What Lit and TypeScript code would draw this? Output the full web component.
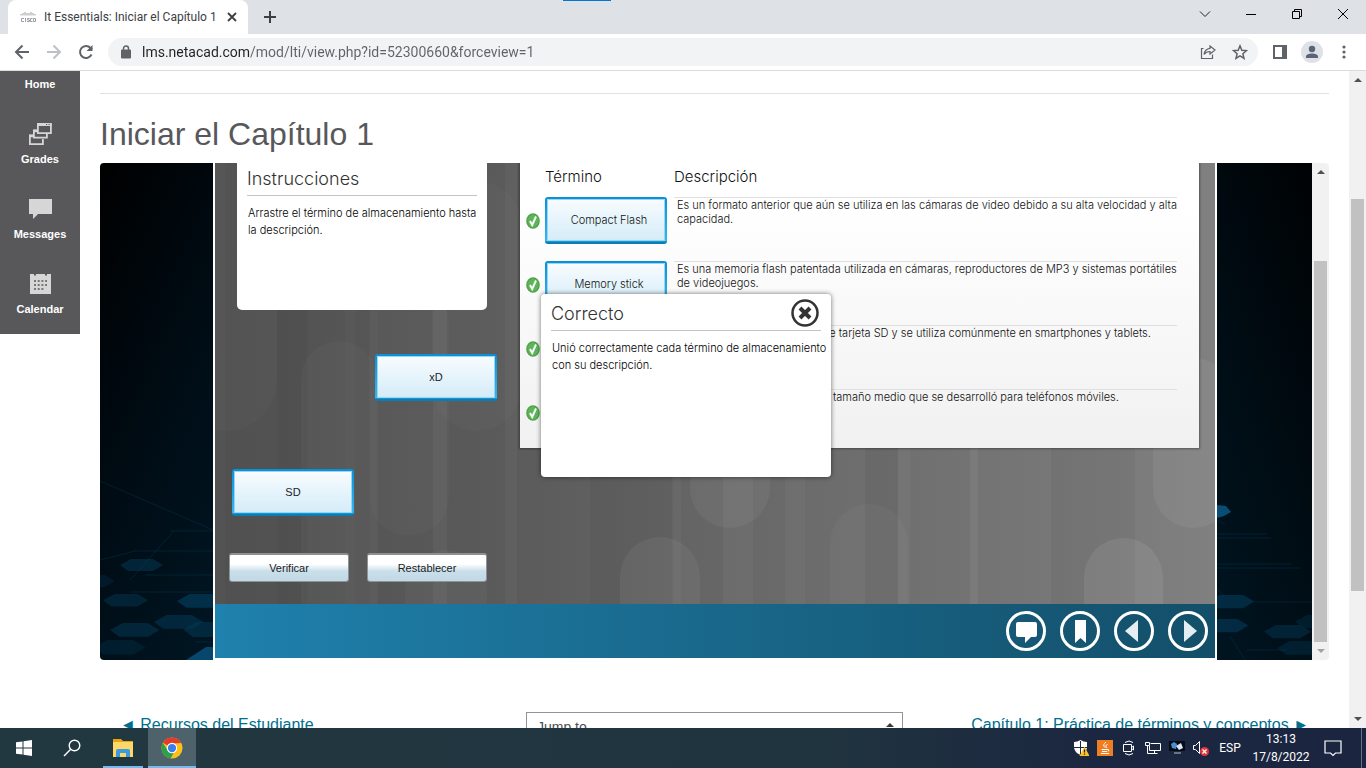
import { LitElement, html, css, svg } from "lit";
import { customElement } from "lit/decorators.js";

const ui = css`
  *, *::before, *::after { box-sizing: border-box; }
  button, input, select { font: inherit; color: inherit; margin: 0; }
  button { padding: 0; border: 0; background: none; cursor: pointer; display: flex; align-items: center; justify-content: center; }
  svg { display: block; flex: none; }
`;

@customElement("browser-bar")
class BrowserBar extends LitElement {
  static styles = [ui, css`
    :host { display: block; flex: none; font-family: Roboto, "Open Sans", sans-serif; background: #dee1e6; }
    .strip { display: flex; height: 34px; padding-left: 8px; position: relative; }
    .accent { position: absolute; top: 0; left: 563px; width: 48px; height: 1px; background: #0078d7; }
    .tab { display: flex; align-items: center; width: 240px; padding: 0 10px 0 12px; background: #fff; border-radius: 8px 8px 0 0; color: #3c4043; font-size: 12px; }
    .tab span { flex: 1; margin-left: 8px; white-space: nowrap; }
    .plus { width: 44px; }
    .win { display: flex; margin-left: auto; }
    .win button { width: 46px; height: 28px; }
    .tools { display: flex; align-items: center; height: 36px; background: #fff; padding: 0 6px 0 6px; }
    .tools > button { width: 32px; height: 32px; }
    .omni { flex: 1; display: flex; align-items: center; height: 28px; margin: 0 6px; padding: 0 2px 0 12px; border-radius: 14px; background: #f1f3f4; }
    .omni input { flex: 1; min-width: 0; height: 28px; margin-left: 10px; padding: 0; border: 0; outline: 0; font-size: 14px; color: transparent; background: linear-gradient(90deg, #202124 108px, #5f6368 108px) text; -webkit-text-fill-color: transparent; }
    .omni button { width: 32px; height: 28px; }
    .line { height: 1px; background: #dadce0; }
  `];

  render() {
    return html`
      <div class="strip">
        <div class="accent"></div>
        <div class="tab">
          <svg width="16" height="16" viewBox="0 0 16 16" stroke="#9aa0a6" fill="none"><path d="M1 5v1.500M3 4v2.500M5 3v3.500M7 4v2.500M9 4v2.500M11 3v3.500M13 4v2.500M15 5v1.500" /><path d="M4 9.500H1.500v3H4M5.500 9v4M9.500 9.500H7.500v1.500h2v1.500h-2.500M12.500 9.500h-2v3h2M13.500 9.500h2v3h-2z" /></svg>
          <span>It Essentials: Iniciar el Capítulo 1</span>
          <button aria-label="Cerrar pestaña"><svg width="12" height="12" viewBox="0 0 12 12" stroke="#3c4043" stroke-width="1.800"><path d="M2 2l8 8M10 2l-8 8" /></svg></button>
        </div>
        <button class="plus" aria-label="Nueva pestaña"><svg width="14" height="14" viewBox="0 0 14 14" stroke="#3c4043" stroke-width="2"><path d="M7 1v12M1 7h12" /></svg></button>
        <div class="win">
          <button aria-label="Buscar pestañas"><svg width="12" height="12" viewBox="0 0 12 12" fill="none" stroke="#222"><path d="M1 3.500l5 5 5-5" /></svg></button>
          <button aria-label="Minimizar"><svg width="12" height="12" viewBox="0 0 12 12" stroke="#000"><path d="M1 6.500h10" /></svg></button>
          <button aria-label="Restaurar"><svg width="12" height="12" viewBox="0 0 12 12" fill="none" stroke="#000"><path d="M1.500 3.500h7v7h-7zM3.500 3.500v-2h7v7h-2" /></svg></button>
          <button aria-label="Cerrar"><svg width="12" height="12" viewBox="0 0 12 12" stroke="#000"><path d="M1 1l10 10M11 1L1 11" /></svg></button>
        </div>
      </div>
      <div class="tools">
        <button aria-label="Atrás"><svg width="16" height="16" viewBox="0 0 16 16" fill="none" stroke="#5f6368" stroke-width="2"><path d="M15 8H2.500M8.500 1.500L2 8l6.500 6.500" /></svg></button>
        <button aria-label="Adelante"><svg width="16" height="16" viewBox="0 0 16 16" fill="none" stroke="#bdc1c6" stroke-width="2"><path d="M1 8h12.500M7.500 1.500L14 8l-6.500 6.500" /></svg></button>
        <button aria-label="Recargar"><svg width="16" height="16" viewBox="0 0 16 16" fill="none" stroke="#5f6368" stroke-width="2"><path d="M13.500 10.500A6 6 0 1 1 12.500 4L14 5.500" /><path d="M14.500 1v6h-6z" fill="#5f6368" stroke="none" /></svg></button>
        <div class="omni">
          <svg width="12" height="14" viewBox="0 0 12 14"><path d="M1.500 5h9v8h-9z" fill="#5f6368" stroke="#5f6368" /><path d="M3.500 5V3.500a2.500 2.500 0 0 1 5 0V5" fill="none" stroke="#5f6368" stroke-width="1.500" /></svg>
          <input aria-label="Dirección" value="lms.netacad.com/mod/lti/view.php?id=52300660&forceview=1" />
          <button aria-label="Compartir"><svg width="16" height="16" viewBox="0 0 16 16" fill="none" stroke="#5f6368" stroke-width="1.200"><path d="M3.500 4.500H1.500v10h11v-4" /><path d="M10 2l5 4-5 4V7.500c-3 0-4.500.8-6 2.800.5-3.500 2.500-5.600 6-6z" /></svg></button>
          <button aria-label="Marcar"><svg width="16" height="16" viewBox="0 0 16 16" fill="none" stroke="#5f6368" stroke-width="1.500"><path d="M8 1.800l1.800 4.400 4.700.4-3.600 3.100 1.100 4.600L8 11.800l-4 2.500 1.100-4.600L1.500 6.600l4.700-.4z" /></svg></button>
        </div>
        <button aria-label="Panel lateral"><svg width="14" height="14" viewBox="0 0 14 14"><path d="M1 1h12v12H1z" fill="none" stroke="#5f6368" stroke-width="2" /><path d="M9 0h5v14H9z" fill="#5f6368" /></svg></button>
        <button aria-label="Perfil"><svg width="22" height="22" viewBox="0 0 22 22"><circle cx="11" cy="11" r="11" fill="#dee1e6" /><circle cx="11" cy="8" r="3.200" fill="#5a6478" /><path d="M5 17v-1.500c0-2 3-3 6-3s6 1 6 3V17z" fill="#5a6478" /></svg></button>
        <button aria-label="Menú"><svg width="4" height="16" viewBox="0 0 4 16" fill="#5f6368"><circle cx="2" cy="3" r="1.600" /><circle cx="2" cy="8" r="1.600" /><circle cx="2" cy="13" r="1.600" /></svg></button>
      </div>
      <div class="line"></div>`;
  }
}

@customElement("side-nav")
class SideNav extends LitElement {
  static styles = [ui, css`
    :host { display: block; flex: none; align-self: flex-start; width: 80px; background: #58585b; font: bold 11px/14px "Liberation Sans", Arial, sans-serif; }
    a { display: flex; flex-direction: column; align-items: center; gap: 6px; padding: 13px 0 18px; color: #fff; text-decoration: none; }
    .home { padding-top: 6px; }
  `];

  render() {
    return html`<nav>
      <a class="home" href="#home">Home</a>
      <a href="#grades"><svg width="24" height="24" viewBox="0 0 24 24" fill="none" stroke="#d6d6d6" stroke-width="1.800"><path d="M9.900 2.900h13v8.200h-13z" /><path d="M9 1h14.800v3H9z" fill="#d6d6d6" stroke="none" /><path d="M9 8.500H5.900v7.200h13V12M5 13.500H1.900v8.600h13V17" /><path d="M5 9h4M1 14h4" stroke-width="2.500" /><path d="M18 2.500h1.200M20.500 2.500h1.200" stroke="#58585b" stroke-width="1" /></svg>Grades</a>
      <a href="#messages"><svg width="24" height="24" viewBox="0 0 24 24" fill="#d6d6d6"><path d="M1 2h23v15H10l-5 5v-5H1z" /></svg>Messages</a>
      <a href="#calendar"><svg width="24" height="24" viewBox="0 0 24 24"><path d="M2 2h21v20H2z" fill="#d6d6d6" /><path d="M7 2v1.500M18 2v1.500" stroke="#58585b" stroke-width="2" /><path d="M6 9h13M6 13h13M6 17h10" stroke="#58585b" stroke-width="1.600" stroke-dasharray="2 1.700" /></svg>Calendar</a>
    </nav>`;
  }
}

@customElement("scroll-rail")
class ScrollRail extends LitElement {
  static styles = [ui, css`
    :host { display: flex; flex-direction: column; flex: none; width: 17px; background: #f1f1f1; }
    button { height: 18px; flex: none; }
    .before { flex: var(--before, 1) 1 0; }
    .thumb { flex: var(--size, 1) 1 0; margin: 0 2px; background: #c1c1c1; }
    .after { flex: var(--after, 1) 1 0; }
    .down { fill: var(--down, #505050); }
  `];

  render() {
    return html`
      <button aria-label="Subir"><svg width="8" height="4" viewBox="0 0 8 4" fill="#505050"><path d="M0 4l4-4 4 4z" /></svg></button>
      <div class="before"></div><div class="thumb"></div><div class="after"></div>
      <button aria-label="Bajar"><svg class="down" width="8" height="4" viewBox="0 0 8 4"><path d="M0 0l4 4 4-4z" /></svg></button>`;
  }
}

const hex = (x: number, y: number, s: number, o: number) =>
  svg`<path d=${`M${x} ${y + 6 * s}L${x + 11 * s} ${y}L${x + 33 * s} ${y}L${x + 43 * s} ${y + 6 * s}L${x + 33 * s} ${y + 12 * s}L${x + 8 * s} ${y + 12 * s}z`} fill="#033652" opacity=${o} />`;

const pill = (x: number, y: number, w: number, h: number, fill: string, o: number) =>
  svg`<rect x=${x} y=${y} width=${w} height=${h} rx=${w / 2} fill=${fill} opacity=${o} />`;

const band = (x: number, w: number, fill: string, o: number) =>
  svg`<path d=${`M${x} 0h${w}v441h-${w}z`} fill=${fill} opacity=${o} />`;

const rows = [
  { term: "Compact Flash", text: ["Es un formato anterior que aún se utiliza en las cámaras de video debido a su alta velocidad y alta", "capacidad."] },
  { term: "Memory stick", text: ["Es una memoria flash patentada utilizada en cámaras, reproductores de MP3 y sistemas portátiles", "de videojuegos."] },
  { term: "microSD", text: ["Es la versión más compacta de tarjeta SD y se utiliza comúnmente en smartphones y tablets."] },
  { term: "miniSD", text: ["Es la variante de tarjeta SD de tamaño medio que se desarrolló para teléfonos móviles."] },
];

@customElement("lesson-frame")
class LessonFrame extends LitElement {
  static styles = [ui, css`
    :host { display: flex; height: 497px; border-radius: 4px; overflow: hidden; font: 300 11px/17px Inter, "Liberation Sans", sans-serif; color: #111; }
    .side { flex: none; position: relative; overflow: hidden; }
    .side svg { position: absolute; left: 0; bottom: 0; }
    .left { width: 113px; background: linear-gradient(115deg, #000 0%, #000d16 55%, #001623 100%); }
    .right { width: 95px; background: linear-gradient(250deg, #000204 0%, #000c13 50%, #001521 100%); }
    .center { flex: 1; min-width: 0; display: flex; flex-direction: column; margin: 0 2px 2px; }
    .stage { position: relative; flex: 1; display: flex; overflow: hidden; background: linear-gradient(90deg, #505050, #5b5b5b 30%, #6d6d6d 62%, #757575 80%, #808080); }
    .bg { position: absolute; inset: 0; width: 100%; height: 100%; }
    .task { position: relative; width: 305px; flex: none; display: flex; flex-direction: column; padding-left: 14px; }
    .card { background: #fff; border-radius: 0 0 5px 5px; width: 250px; height: 147px; margin-left: 8px; padding: 0 10px; color: #000; }
    h2 { margin: 0; font-weight: 300; font-size: 18px; line-height: 32px; border-bottom: 1px solid #c4c4c4; color: #333; }
    .card p, .dialog p { margin: 9px 0 0; padding-left: 1px; white-space: nowrap; }
    .actions { display: flex; gap: 18px; margin-top: auto; padding-bottom: 22px; }
    .push { width: 120px; height: 29px; border: 1px solid #8d9396; border-top: 2px solid #8f8f8f; border-radius: 3px; color: #222; background: linear-gradient(#fff 35%, #c9dfea 62%, #c1d9e5); font-family: "Liberation Sans", Arial, sans-serif; }
    .chip { width: 122px; height: 47px; border: solid transparent; border-width: 2px 2px 3px; border-radius: 3px; color: #111;
      background: linear-gradient(#f8fcff, #d4ecf8) padding-box, linear-gradient(#0a90d6, #33b6f0 93%, #087fb4 96%) border-box; box-shadow: inset 0 0 0 1px #9ad6f4; }
    .loose { position: absolute; color: #222; font-family: "Liberation Sans", Arial, sans-serif; }
    .sheet { position: relative; flex: 1; height: 285px; margin-right: 16px; background: linear-gradient(#fff 15%, #f1f1f1); box-shadow: 0 0 2px 1px rgba(0, 0, 0, .35); }
    table { border-collapse: collapse; width: 100%; table-layout: fixed; line-height: 14px; }
    th { height: 34px; padding: 0 0 6px; text-align: left; font-weight: 300; font-size: 15px; }
    td { height: 64px; padding: 0; vertical-align: top; }
    .c1 { width: 25px; } .c2 { width: 129px; } .c4 { width: 22px; }
    .ok svg { margin: 16px 0 0 6px; }
    .term .chip { padding-left: 6px; }
    .desc { border-top: 1px solid #e0e0e0; padding: 0 0 0 3px; white-space: nowrap; }
    .dialog { position: absolute; left: 326px; top: 131px; width: 290px; height: 183px; padding: 4px 10px; border-radius: 4px; background: #fff; box-shadow: 0 0 5px rgba(0, 0, 0, .55); color: #000; }
    .close { position: absolute; right: 11px; top: 4px; }
    .bar { display: flex; justify-content: flex-end; align-items: center; gap: 14px; height: 54px; padding-right: 7px; background: linear-gradient(90deg, #1f81ad, #134f69); }
    scroll-rail { --before: 80; --size: 382; --after: 0; --down: #a3a3a3; }
  `];

  render() {
    return html`
      <div class="side left"><svg width="113" height="230" viewBox="0 0 113 230">
        ${hex(20, 129, 1, .55)}${hex(-28, 145, 1, .3)}${hex(3, 164, 1.050, .5)}${hex(77, 164, 1.150, .8)}${hex(54, 185, 1.150, .6)}${hex(10, 193, 1.150, .55)}${hex(83, 192, 1.250, .6)}${hex(-6, 210, 1.200, .35)}
        <path d="M86 230l20-13h7v13z" fill="#0a5c8c" opacity=".7" />
        <path d="M0 51l113 49M70 101h43M74 101L30 150M35 121h78M45 145h68M30 162h83M0 130l35-9M95 212h18" fill="none" stroke="#0a4a6e" opacity=".3" />
      </svg></div>
      <div class="center">
        <div class="stage">
          <svg class="bg" viewBox="0 0 1000 441" preserveAspectRatio="none">
            ${band(0, 10, "#fff", .02)}${band(62, 30, "#000", .03)}${band(130, 10, "#fff", .02)}${band(155, 8, "#fff", .02)}${band(218, 14, "#fff", .04)}${band(290, 12, "#fff", .03)}${band(375, 82, "#000", .04)}${band(458, 8, "#fff", .03)}${band(508, 30, "#fff", .04)}${band(570, 20, "#fff", .03)}${band(650, 33, "#000", .05)}${band(683, 12, "#fff", .03)}${band(755, 8, "#fff", .05)}${band(836, 84, "#000", .04)}
            ${pill(-40, -60, 102, 328, "#fff", .02)}${pill(86, 178, 76, 330, "#fff", .025)}${pill(154, 120, 80, 253, "#fff", .02)}${pill(190, 387, 82, 200, "#fff", .035)}${pill(217, 18, 90, 250, "#fff", .02)}
            ${pill(405, 374, 80, 200, "#fff", .05)}${pill(475, 200, 80, 165, "#fff", .05)}${pill(615, 341, 78, 200, "#fff", .03)}${pill(938, 195, 80, 170, "#fff", .06)}${pill(869, 375, 79, 200, "#fff", .08)}
          </svg>
          <section class="task">
            <div class="card"><h2>Instrucciones</h2><p>Arrastre el término de almacenamiento hasta<br />la descripción.</p></div>
            <div class="actions"><button class="push">Verificar</button><button class="push">Restablecer</button></div>
          </section>
          <section class="sheet">
            <table>
              <colgroup><col class="c1" /><col class="c2" /><col /><col class="c4" /></colgroup>
              <thead><tr><th></th><th>Término</th><th>Descripción</th><th></th></tr></thead>
              <tbody>${rows.map((r) => html`<tr>
                <td class="ok"><svg width="14" height="16" viewBox="0 0 14 16"><ellipse cx="7" cy="8" rx="6.800" ry="7.800" fill="#4da648" /><ellipse cx="7" cy="8" rx="5.300" ry="6.300" fill="#5fb45a" /><path d="M4 8l2.200 4L10 3.500" fill="none" stroke="#fff" stroke-width="1.900" /></svg></td>
                <td class="term"><button class="chip">${r.term}</button></td>
                <td class="desc">${r.text.map((t, i) => (i ? html`<br />${t}` : t))}</td><td></td>
              </tr>`)}</tbody>
            </table>
          </section>
          <button class="chip loose" style="left:160px;top:191px">xD</button>
          <button class="chip loose" style="left:17px;top:306px">SD</button>
          <div class="dialog" role="dialog" aria-label="Correcto">
            <h2>Correcto</h2>
            <button class="close" aria-label="Cerrar"><svg width="30" height="30" viewBox="0 0 30 30" fill="none" stroke="#333"><circle cx="15" cy="15" r="12.500" stroke-width="2.500" /><path d="M10 10l10 10M20 10L10 20" stroke-width="4" /></svg></button>
            <p>Unió correctamente cada término de almacenamiento<br />con su descripción.</p>
          </div>
        </div>
        <div class="bar">
          <button aria-label="Comentarios"><svg width="40" height="40" viewBox="0 0 40 40"><circle cx="20" cy="20" r="18.500" fill="none" stroke="#fff" stroke-width="3" /><path d="M12 11h17q2 0 2 2v11q0 2-2 2h-4l-6 6v-6h-7q-2 0-2-2V13q0-2 2-2z" fill="#fff" /></svg></button>
          <button aria-label="Marcador"><svg width="40" height="40" viewBox="0 0 40 40"><circle cx="20" cy="20" r="18.500" fill="none" stroke="#fff" stroke-width="3" /><path d="M15 9h11v23l-5.500-5L15 32z" fill="#fff" /></svg></button>
          <button aria-label="Anterior"><svg width="40" height="40" viewBox="0 0 40 40"><circle cx="20" cy="20" r="18.500" fill="none" stroke="#fff" stroke-width="3" /><path d="M24 9v22L11 20z" fill="#e4edf2" /></svg></button>
          <button aria-label="Siguiente"><svg width="40" height="40" viewBox="0 0 40 40"><circle cx="20" cy="20" r="18.500" fill="none" stroke="#fff" stroke-width="3" /><path d="M16 9v22l13-11z" fill="#e4edf2" /></svg></button>
        </div>
      </div>
      <div class="side right"><svg width="95" height="230" viewBox="0 0 95 230">
        <path d="M0 75l9 1 5 6-7 4-7 2z" fill="#0a5c8c" opacity=".8" />
        ${hex(-10, 165, 1.100, .7)}${hex(-16, 189, 1.100, .7)}${hex(47, 195, 1.100, .5)}${hex(78, 185, 1.100, .35)}${hex(60, 211, 1.150, .4)}
        <path d="M0 104h50M0 108h54M0 134h74M0 138h84M37 172h58M13 206l15 24M30 220h40M0 90l8 4M0 158l8 10" fill="none" stroke="#0a4a6e" opacity=".3" />
      </svg></div>
      <scroll-rail></scroll-rail>`;
  }
}

@customElement("task-bar")
class TaskBar extends LitElement {
  static styles = [ui, css`
    :host { display: flex; flex: none; height: 40px; background: linear-gradient(90deg, #223840, #20343f 60%, #1b2740 80%, #1b2540); color: #fff; font: 12px/18px Roboto, "Open Sans", sans-serif; }
    .app { width: 48px; height: 40px; }
    .on { background: #4e626b; border-bottom: 2px solid #76b9ed; padding-top: 2px; width: 48px; }
    .file { width: 40px; margin: 0 5px 0 7px; border-bottom: 2px solid #76b9ed; padding-top: 2px; }
    .tray { display: flex; align-items: center; margin-left: auto; }
    .tray button { width: 24px; height: 40px; }
    .tray .lang { width: 34px; }
    .tray .clock { width: 68px; text-align: center; }
    .tray .note { width: 36px; }
    .end { width: 5px; margin-left: 10px; height: 40px; border-left: 1px solid #66708a; }
  `];

  render() {
    return html`
      <button class="app" aria-label="Inicio"><svg width="16" height="16" viewBox="0 0 16 16" fill="#fff"><path d="M0 2.300L6.500 1.400V7.500H0zM7.500 1.200L16 0V7.500H7.500zM0 8.500H6.500v6.100L0 13.700zM7.500 8.500H16V16L7.500 14.800z" /></svg></button>
      <button class="app" aria-label="Buscar"><svg width="18" height="18" viewBox="0 0 18 18" fill="none" stroke="#fff" stroke-width="1.400"><circle cx="11.500" cy="6.500" r="5.300" /><path d="M7.700 10.300L1 17" /></svg></button>
      <button class="app file" aria-label="Explorador"><svg width="22" height="20" viewBox="0 0 22 20"><path d="M1 1h8l2 2h10v16H1z" fill="#e8a317" /><path d="M1 4h20v15H1z" fill="#ffd766" /><path d="M4 19v-6q0-2 2-2h10q2 0 2 2v6h-4v-4H8v4z" fill="#3a9be0" /></svg></button>
      <button class="app on" aria-label="Chrome"><svg width="22" height="24" viewBox="0 0 24 24"><circle cx="12" cy="12" r="11.500" fill="#fbc116" /><path d="M2 6.200A11.500 11.500 0 0 1 22 6.500L12 7z" fill="#e33b2e" /><path d="M2 6.200L7.500 15l6.500 2-3.500 6.400A11.500 11.500 0 0 1 2 6.200z" fill="#2da04e" /><path d="M2 6.200L12 6v6z" fill="#e33b2e" /><circle cx="12" cy="12" r="5.700" fill="#fff" /><circle cx="12" cy="12" r="4.500" fill="#3b7ded" /></svg></button>
      <div class="tray">
        <button aria-label="Seguridad"><svg width="16" height="16" viewBox="0 0 16 16"><path d="M7.500 0q3 2 6.500 2v5q0 5-6.500 8Q1 12 1 7V2q3.500 0 6.500-2z" fill="#fff" /><path d="M7.500 1v14M1 7.500h13" stroke="#1b2640" /><path d="M11.500 6.500L16.500 16h-10z" fill="#f9c22d" /><path d="M11.500 9.500v3M11.500 13.500v1.200" stroke="#222" stroke-width="1.200" /></svg></button>
        <button aria-label="Java"><svg width="16" height="16" viewBox="0 0 16 16" fill="none" stroke="#fff"><path d="M0 0h16v16H0z" fill="#ef7d22" stroke="none" /><path d="M9 2q-4 3-1 5.500M10.500 4q-3 2-1 4M4.500 9.500h6.500M11 9.500q2 0 0 2M5 11.500h5M4 13.500h8" /></svg></button>
        <button aria-label="Cámara"><svg width="14" height="16" viewBox="0 0 14 16" fill="none" stroke="#fff"><path d="M1.500 4.500h8v7h-8zM9.500 7.500l2-1.500v4l-2-1.500M3 2.500Q7-.5 11 2.500M3 13.500q4 3 8 0" /></svg></button>
        <button aria-label="Red"><svg width="16" height="16" viewBox="0 0 16 16" fill="none" stroke="#fff"><path d="M5.500 3.500h10v7h-11V6M.5 2.500h4v3h-4zM2.500 5.500v8h5M9.500 10.500v3M6.500 13.500h6" /></svg></button>
        <button aria-label="Pantalla"><svg width="16" height="16" viewBox="0 0 16 16"><path d="M0 1h16v10H0z" fill="#060b16" /><path d="M2 4l3-2 3 2-1 5-4-1z" fill="#4a8fd4" /><path d="M7 6l5-3 2 5-4 2z" fill="#dfe8f2" /><path d="M5 12h7v2H5z" fill="#6a7383" /></svg></button>
        <button aria-label="Volumen"><svg width="16" height="16" viewBox="0 0 16 16" fill="none" stroke="#fff"><path d="M.5 5.500h2l4-4v12l-4-4h-2z" /><circle cx="11.500" cy="11.500" r="4.500" fill="#e0343c" stroke="none" /><path d="M9.500 9.500l4 4M13.500 9.500l-4 4" stroke-width="1.200" /></svg></button>
        <button class="lang">ESP</button>
        <div class="clock"><div>13:13</div><div>17/8/2022</div></div>
        <button class="note" aria-label="Notificaciones"><svg width="18" height="18" viewBox="0 0 18 18" fill="none" stroke="#fff" stroke-width="1.200"><path d="M1 2h16v12h-5.500L9 16.500 6.500 14H1z" /></svg></button>
        <div class="end"></div>
      </div>`;
  }
}

@customElement("app-root")
class AppRoot extends LitElement {
  static styles = [ui, css`
    :host { display: flex; flex-direction: column; height: 100vh; overflow: hidden; background: #fff; font: 16px/24px "Liberation Sans", Arial, sans-serif; }
    .view { flex: 1; min-height: 0; display: flex; overflow: hidden; }
    main { flex: 1; min-width: 0; margin: 22px 20px 0; }
    hr { border: 0; height: 1px; margin: 0; background: #dee2e6; }
    h1 { margin: 21px 0 10px; font-size: 32px; line-height: 38px; font-weight: 400; color: #58585b; }
    .jump { display: flex; justify-content: space-between; margin-top: 52px; padding: 0 20px; }
    .jump > * { flex: 1 1 0; }
    .jump a { padding-top: 1px; color: #00708f; text-decoration: none; white-space: nowrap; }
    .jump .next { text-align: right; }
    .pick { flex: 0 0 377px; position: relative; }
    .pick select { width: 100%; height: 30px; padding: 0 10px; appearance: none; border: 1px solid #8f959e; border-radius: 0; background: #fff; color: #495057; font-size: 14px; }
    .pick svg { position: absolute; right: 9px; top: 10px; }
    .rail { --before: 110; --size: 392; --after: 119; }
  `];

  render() {
    return html`
      <browser-bar></browser-bar>
      <div class="view">
        <side-nav></side-nav>
        <main>
          <hr />
          <h1>Iniciar el Capítulo 1</h1>
          <lesson-frame></lesson-frame>
          <div class="jump">
            <a href="#prev">◄ Recursos del Estudiante</a>
            <div class="pick"><select aria-label="Jump to"><option>Jump to...</option></select><svg width="8" height="14" viewBox="0 0 8 14" fill="#343a40"><path d="M0 5l4-4 4 4zM0 9l4 4 4-4z" /></svg></div>
            <a class="next" href="#next">Capítulo 1: Práctica de términos y conceptos ►</a>
          </div>
        </main>
        <scroll-rail class="rail"></scroll-rail>
      </div>
      <task-bar></task-bar>`;
  }
}
